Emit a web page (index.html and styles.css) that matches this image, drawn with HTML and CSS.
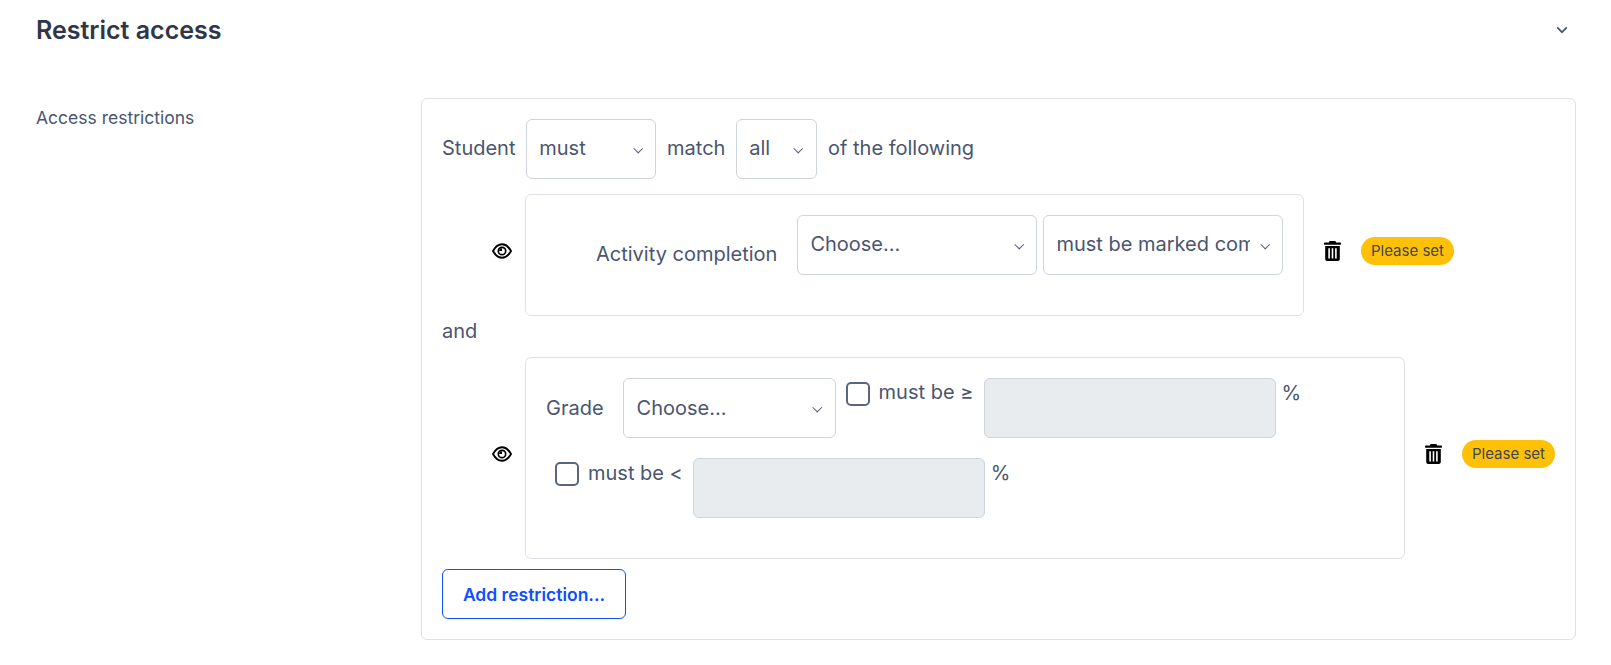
FILE: index.html
```html
<!DOCTYPE html>
<html lang="en">
<head>
<meta charset="utf-8">
<title>Restrict access</title>
<link rel="stylesheet" href="styles.css">
</head>
<body>
<section class="section">
  <header class="section-head">
    <h2 class="section-title">Restrict access</h2>
    <svg class="head-chevron" width="12" height="8" viewBox="0 0 12 8" aria-hidden="true"><path d="M1.2 1.4 6 6.2l4.8-4.8" fill="none" stroke="#4a5570" stroke-width="1.7"/></svg>
  </header>
  <div class="field">
    <div class="field-label">Access restrictions</div>
    <div class="card">
      <div class="top-row">
        <span class="top-text">Student</span>
        <span class="sel sel-must"><select><option>must</option></select></span>
        <span class="top-text">match</span>
        <span class="sel sel-all"><select><option>all</option></select></span>
        <span class="top-text">of the following</span>
      </div>

      <div class="rule-row rule-row-first">
        <div class="eye-cell">
          <svg class="eye" width="20" height="16" viewBox="0 0 20 16" aria-hidden="true"><path d="M1 8C3.4 3.6 6.4 1.2 10 1.2S16.6 3.6 19 8c-2.4 4.4-5.4 6.8-9 6.8S3.4 12.4 1 8Z" fill="none" stroke="#000" stroke-width="1.9"/><circle cx="10" cy="8" r="3.7" fill="none" stroke="#000" stroke-width="1.7"/><path d="M10 5.2A2.8 2.8 0 0 0 7.2 8H10Z" fill="#000"/></svg>
        </div>
        <div class="rule-box rule-box-a">
          <div class="rule-line">
            <span class="rule-label rule-label-indent">Activity completion</span>
            <span class="sel sel-wide"><select><option>Choose...</option></select></span>
            <span class="sel sel-wide sel-next"><select><option>must be marked complete</option></select></span>
          </div>
        </div>
        <div class="rule-actions">
          <svg class="trash" width="17" height="20" viewBox="0 0 17 20" aria-hidden="true"><path fill-rule="evenodd" d="M5.6 0h5.8l.8 1.6h4.2c.3 0 .6.3.6.6v1c0 .3-.3.5-.6.5H.6C.3 3.700 0 3.500 0 3.200v-1c0-.3.3-.6.6-.6h4.200ZM1.200 5h14.600v13c0 1.100-.9 2-2 2H3.200c-1.100 0-2-.9-2-2ZM4.300 7.200v10.300h1.600V7.200Zm3.400 0v10.300h1.600V7.200Zm3.400 0v10.300h1.600V7.200Z"/></svg>
          <span class="badge">Please set</span>
        </div>
      </div>

      <div class="and-row">and</div>

      <div class="rule-row">
        <div class="eye-cell">
          <svg class="eye" width="20" height="16" viewBox="0 0 20 16" aria-hidden="true"><path d="M1 8C3.4 3.6 6.4 1.2 10 1.2S16.6 3.600 19 8c-2.400 4.400-5.400 6.800-9 6.800S3.400 12.400 1 8Z" fill="none" stroke="#000" stroke-width="1.9"/><circle cx="10" cy="8" r="3.7" fill="none" stroke="#000" stroke-width="1.7"/><path d="M10 5.200A2.800 2.800 0 0 0 7.200 8H10Z" fill="#000"/></svg>
        </div>
        <div class="rule-box rule-box-b">
          <div class="rule-line">
            <span class="rule-label">Grade</span>
            <span class="sel sel-grade"><select><option>Choose...</option></select></span>
            <input class="check check-first" type="checkbox">
            <span class="inline-text inline-text-first">must be ≥</span>
            <input class="num" type="text" disabled>
            <span class="unit">%</span>
          </div>
          <div class="rule-line rule-line-second">
            <input class="check" type="checkbox">
            <span class="inline-text">must be &lt;</span>
            <input class="num" type="text" disabled>
            <span class="unit">%</span>
          </div>
        </div>
        <div class="rule-actions">
          <svg class="trash" width="17" height="20" viewBox="0 0 17 20" aria-hidden="true"><path fill-rule="evenodd" d="M5.600 0h5.800l.8 1.600h4.200c.3 0 .6.3.6.6v1c0 .3-.3.5-.6.5H.6C.3 3.700 0 3.500 0 3.200v-1c0-.3.3-.6.6-.6h4.200ZM1.200 5h14.600v13c0 1.100-.9 2-2 2H3.200c-1.100 0-2-.9-2-2ZM4.300 7.200v10.300h1.600V7.200Zm3.400 0v10.300h1.600V7.200Zm3.400 0v10.300h1.600V7.200Z"/></svg>
          <span class="badge">Please set</span>
        </div>
      </div>

      <button class="add-btn" type="button">Add restriction...</button>
    </div>
  </div>
</section>
</body>
</html>
```
FILE: styles.css
```css
* { box-sizing: border-box; }

html, body { margin: 0; padding: 0; background: #fff; }

body {
  font-family: Inter, "Liberation Sans", sans-serif;
  font-size: 20px;
  line-height: 30px;
  color: #4a5570;
}

.section { padding: 0 36px; }

.section-head {
  display: flex;
  justify-content: space-between;
  align-items: center;
  height: 60px;
  padding-right: 7px;
}

.section-title {
  margin: 0;
  font-size: 25px;
  line-height: 30px;
  font-weight: 600;
  color: #2f3647;
}

.head-chevron { display: block; }

.field {
  display: flex;
  padding-top: 38px;
}

.field-label {
  flex: 0 0 385px;
  font-size: 17.5px;
  line-height: 26px;
  padding-top: 7px;
}

.card {
  flex: 1;
  height: 542px;
  border: 1px solid #dee2e6;
  border-radius: 6px;
  padding: 20px;
}

.top-row {
  display: flex;
  align-items: center;
  gap: 10.8px;
  height: 60px;
}

.top-text { margin-bottom: 2px; }

.sel {
  position: relative;
  display: block;
  flex: none;
  height: 60px;
}

.sel::after {
  content: "";
  position: absolute;
  right: 15.25px;
  top: 26px;
  width: 5.5px;
  height: 5.5px;
  border-right: 1.8px solid #4a5570;
  border-bottom: 1.8px solid #4a5570;
  transform: rotate(45deg);
  pointer-events: none;
}

.sel select {
  appearance: none;
  display: block;
  width: 100%;
  height: 100%;
  padding: 0 32px 2px 12px;
  border: 1px solid #ced4da;
  border-radius: 6px;
  background: #fff;
  color: #4a5570;
  font: inherit;
}

.sel-must { width: 130px; }
.sel-all { width: 81px; }
.sel-wide { width: 240px; }
.sel-next { margin-left: 6px; }
.sel-grade { width: 213px; margin-left: 19px; }
.sel-grade select { padding: 0 32px 0 13px; }

.rule-row {
  display: flex;
  align-items: center;
}

.rule-row-first { margin-top: 15px; }

.eye-cell {
  flex: 0 0 83px;
  display: flex;
  justify-content: flex-end;
  padding: 0 13px 8px 0;
}

.eye, .trash { display: block; flex: none; }

.rule-box {
  border: 1px solid #dee2e6;
  border-radius: 6px;
  padding: 20px;
}

.rule-box-a { width: 779px; height: 122px; }
.rule-box-b { width: 880px; height: 202px; }

.rule-line {
  display: flex;
  align-items: flex-start;
}

.rule-line-second {
  margin-top: 20px;
  padding-left: 9px;
}

.rule-label {
  flex: none;
  line-height: 60px;
}

.rule-label-indent {
  margin: 9px 20px 0 50px;
}

.check {
  appearance: none;
  flex: none;
  width: 24px;
  height: 24px;
  margin: 4px 9px 0 0;
  border: 2px solid #5a6680;
  border-radius: 5px;
  background: #fff;
}

.check-first { margin-left: 10px; }

.inline-text {
  flex: none;
  margin: 0 10.5px 0 0;
}

.inline-text-first { margin-top: -1px; }

.num {
  flex: none;
  width: 292px;
  height: 60px;
  border: 1px solid #ced4da;
  border-radius: 6px;
  background: #e9ecef;
}

.unit { margin: 0 0 0 5.5px; }

.rule-actions {
  display: flex;
  align-items: center;
  padding: 0 0 8px 20px;
}

.badge {
  margin-left: 20px;
  padding: 0 10px;
  height: 28px;
  line-height: 27px;
  border-radius: 14px;
  background: #ffc107;
  color: #3f4654;
  font-size: 15px;
  white-space: nowrap;
}

.and-row {
  height: 41px;
}

.add-btn {
  display: block;
  margin-top: 10px;
  width: 184px;
  height: 50px;
  border: 1px solid #0f4fff;
  border-radius: 6px;
  background: #fff;
  color: #0f4fff;
  font-family: inherit;
  font-size: 17.5px;
  font-weight: 600;
}
```
